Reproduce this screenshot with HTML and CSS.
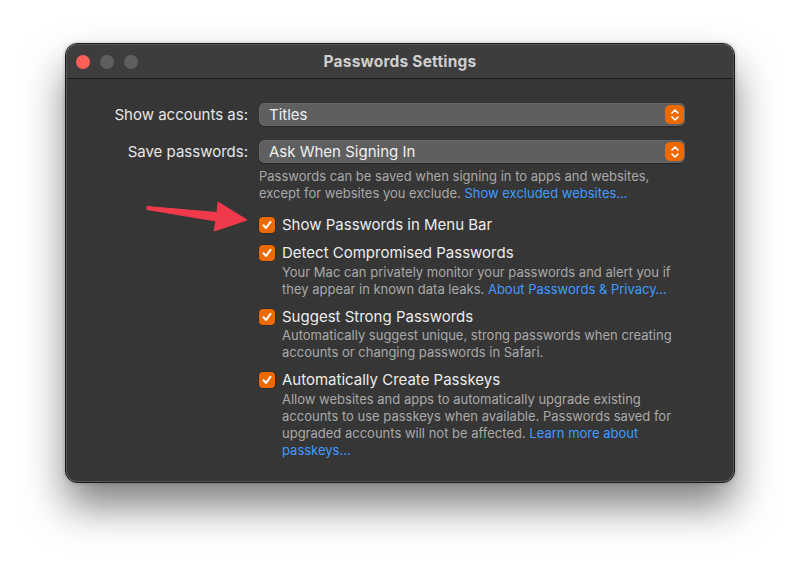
FILE: index.html
```html
<!DOCTYPE html>
<html>
<head>
<meta charset="utf-8">
<link rel="stylesheet" href="styles.css">
</head>
<body>
<div class="stage">
  <div class="window">
    <div class="titlebar">
      <div class="lights">
        <span class="light red"></span>
        <span class="light gray"></span>
        <span class="light gray"></span>
      </div>
      <div class="title">Passwords Settings</div>
    </div>
    <div class="content">
      <div class="row popup-row">
        <div class="label">Show accounts as:</div>
        <div class="popup"><span>Titles</span><span class="stepper"><svg width="10" height="14" viewBox="0 0 10 14"><path d="M2 5 L5 2 L8 5 M2 9 L5 12 L8 9" fill="none" stroke="#fff" stroke-width="1.6" stroke-linecap="round" stroke-linejoin="round"/></svg></span></div>
      </div>
      <div class="row popup-row second">
        <div class="label">Save passwords:</div>
        <div class="popup"><span>Ask When Signing In</span><span class="stepper"><svg width="10" height="14" viewBox="0 0 10 14"><path d="M2 5 L5 2 L8 5 M2 9 L5 12 L8 9" fill="none" stroke="#fff" stroke-width="1.6" stroke-linecap="round" stroke-linejoin="round"/></svg></span></div>
      </div>
      <div class="row">
        <div class="label"></div>
        <div class="desc">Passwords can be saved when signing in to apps and websites,<br>except for websites you exclude. <a>Show excluded websites…</a></div>
      </div>

      <div class="row check-row first-check">
        <div class="label"></div>
        <div class="check-block">
          <div class="check-line"><span class="cb"><svg width="12" height="12" viewBox="0 0 12 12"><path d="M2.5 6.3 L5 9 L9.5 2.8" fill="none" stroke="#fff" stroke-width="2" stroke-linecap="round" stroke-linejoin="round"/></svg></span>Show Passwords in Menu Bar</div>
        </div>
      </div>
      <div class="row check-row">
        <div class="label"></div>
        <div class="check-block">
          <div class="check-line"><span class="cb"><svg width="12" height="12" viewBox="0 0 12 12"><path d="M2.5 6.3 L5 9 L9.5 2.8" fill="none" stroke="#fff" stroke-width="2" stroke-linecap="round" stroke-linejoin="round"/></svg></span>Detect Compromised Passwords</div>
          <div class="desc sub">Your Mac can privately monitor your passwords and alert you if<br>they appear in known data leaks. <a>About Passwords &amp; Privacy…</a></div>
        </div>
      </div>
      <div class="row check-row">
        <div class="label"></div>
        <div class="check-block">
          <div class="check-line"><span class="cb"><svg width="12" height="12" viewBox="0 0 12 12"><path d="M2.5 6.3 L5 9 L9.5 2.8" fill="none" stroke="#fff" stroke-width="2" stroke-linecap="round" stroke-linejoin="round"/></svg></span>Suggest Strong Passwords</div>
          <div class="desc sub">Automatically suggest unique, strong passwords when creating<br>accounts or changing passwords in Safari.</div>
        </div>
      </div>
      <div class="row check-row">
        <div class="label"></div>
        <div class="check-block">
          <div class="check-line"><span class="cb"><svg width="12" height="12" viewBox="0 0 12 12"><path d="M2.5 6.3 L5 9 L9.5 2.8" fill="none" stroke="#fff" stroke-width="2" stroke-linecap="round" stroke-linejoin="round"/></svg></span>Automatically Create Passkeys</div>
          <div class="desc sub">Allow websites and apps to automatically upgrade existing<br>accounts to use passkeys when available. Passwords saved for<br>upgraded accounts will not be affected. <a>Learn more about<br>passkeys…</a></div>
        </div>
      </div>
    </div>
  </div>
  <svg class="arrow" width="110" height="40" viewBox="0 0 110 40">
    <path d="M1 6.5 L71 12.5 L72 2 L101 20 L68 31 L70 21 L1 9.5 Z" fill="#f03a4c" stroke="#f03a4c" stroke-width="1" stroke-linejoin="round"/>
  </svg>
</div>
</body>
</html>
```
FILE: styles.css
```css
* { box-sizing: border-box; }
html, body {
  margin: 0;
  padding: 0;
  background: #ffffff;
  width: 800px;
  height: 570px;
  overflow: hidden;
  font-family: Inter, "Noto Sans", "Liberation Sans", sans-serif;
}
.stage {
  position: relative;
  width: 800px;
  height: 570px;
  padding: 44px 66px 0 66px;
}
.window {
  width: 668px;
  height: 438px;
  background: #363636;
  border-radius: 11px;
  border: 1px solid #555;
  outline: 1px solid #1a1a1a;
  box-shadow: 0 24px 40px rgba(0,0,0,0.5), 0 0 5px rgba(0,0,0,0.3);
  overflow: hidden;
}
.titlebar {
  position: relative;
  height: 34px;
  background: #3d3d3d;
  border-bottom: 1px solid #1c1c1c;
  display: flex;
  align-items: center;
  justify-content: center;
}
.lights {
  position: absolute;
  left: 9px;
  top: 10px;
  display: flex;
  gap: 10px;
}
.light {
  width: 14px;
  height: 14px;
  border-radius: 50%;
  display: block;
}
.light.red { background: #fe5f57; }
.light.gray { background: #5e5e5e; }
.title {
  color: #cfcfcf;
  font-size: 15.5px;
  font-weight: 700;
  letter-spacing: 0.2px;
}
.content {
  padding-top: 24px;
  color: #e6e6e6;
}
.row {
  display: flex;
  align-items: flex-start;
}
.label {
  width: 182px;
  flex: none;
  text-align: right;
  font-size: 15px;
  padding-right: 1px;
  margin-right: 10px;
  line-height: 23px;
}
.popup-row.second { margin-top: 14px; }
.popup {
  width: 426px;
  height: 23px;
  background: #5f5f5f;
  border-radius: 6px;
  box-shadow: 0 0 0 0.5px #6f6f6f inset, 0 1px 1px rgba(0,0,0,0.3);
  display: flex;
  align-items: center;
  justify-content: space-between;
  padding: 0 1px 0 10px;
  font-size: 15px;
  color: #f0f0f0;
}
.stepper {
  width: 19px;
  height: 19px;
  background: #ec6a00;
  border-radius: 5px;
  display: flex;
  align-items: center;
  justify-content: center;
}
.desc {
  font-size: 13px;
  line-height: 17px;
  color: #a9a9a9;
  margin-top: 5px;
}
.desc a { color: #3f9bff; }
.check-row { margin-top: 10px; }
.first-check { margin-top: 14px; }
.check-line {
  display: flex;
  align-items: center;
  font-size: 15px;
  line-height: 18px;
  color: #ececec;
}
.cb {
  width: 16px;
  height: 16px;
  border-radius: 4px;
  background: #ec6a00;
  margin-right: 7px;
  display: flex;
  align-items: center;
  justify-content: center;
  box-shadow: 0 0 0 0.5px rgba(0,0,0,0.3);
}
.desc.sub {
  margin-top: 1.5px;
  padding-left: 23px;
}
.arrow {
  position: absolute;
  left: 146px;
  top: 200px;
}
```
